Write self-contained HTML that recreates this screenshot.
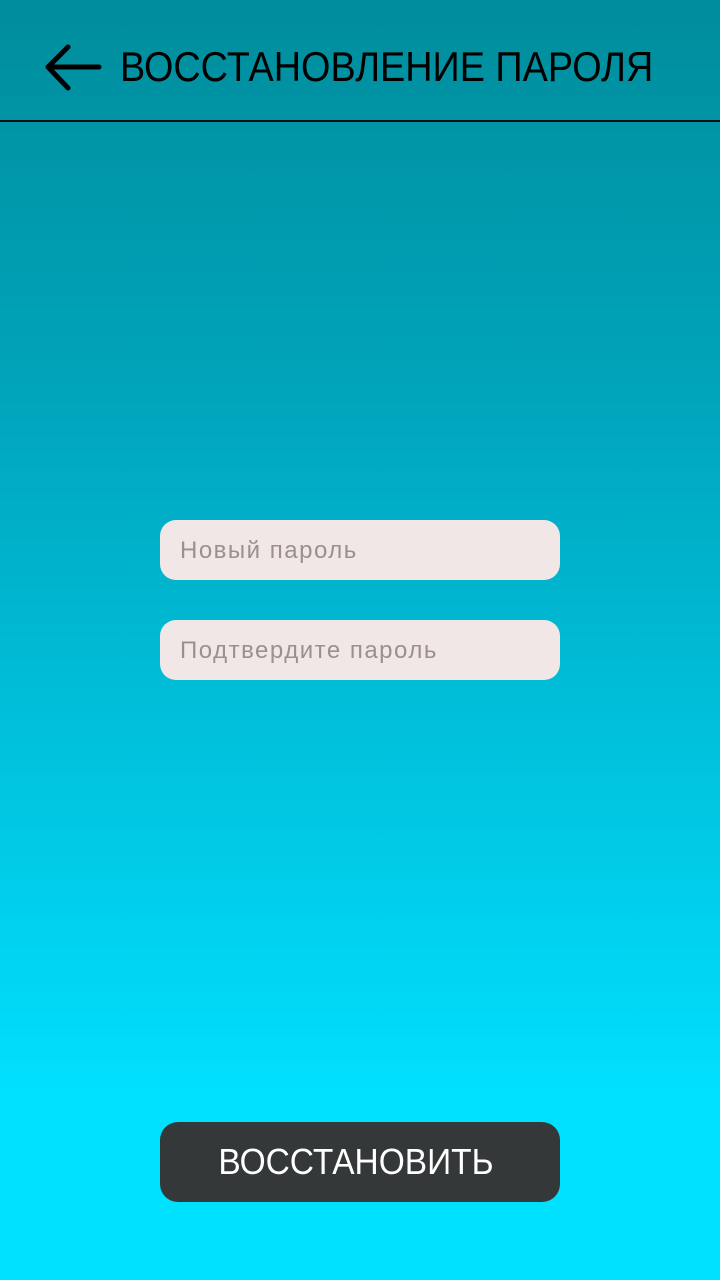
<!DOCTYPE html>
<html><head><meta charset="utf-8"><style>
html,body{margin:0;padding:0}
body{width:720px;height:1280px;position:relative;overflow:hidden;font-family:"Liberation Sans",sans-serif;
background:linear-gradient(180deg,#008d9c 0px,#00a5bc 400px,#00c6e2 800px,#00e1ff 1100px,#00e1ff 1280px);}
.hdr{position:absolute;left:0;top:0;width:720px;height:120px;border-bottom:2px solid #111;}
.title{position:absolute;left:120px;top:44px;font-size:42px;color:#000;white-space:nowrap;transform-origin:0 0;transform:scaleX(0.9);line-height:46px}
.in{position:absolute;left:160px;width:400px;height:60px;border-radius:16px;background:#f2e7e7;color:#9a9090;font-size:24px;line-height:62px;box-sizing:border-box;padding-left:20px;letter-spacing:1.5px}
.btn{position:absolute;left:160px;top:1122px;width:400px;height:80px;border-radius:18px;background:#353839;color:#fff;font-size:36px;line-height:80px;text-align:center;box-sizing:border-box;padding-right:8px}
.btn span{display:inline-block;transform:scaleX(0.93);font-weight:300}
</style></head><body>
<div class="hdr">
<svg style="position:absolute;left:44px;top:44px" width="58" height="48" viewBox="0 0 58 48"><path d="M55 23H5M24 3L4 23L24 44" fill="none" stroke="#000" stroke-width="5" stroke-linecap="round" stroke-linejoin="round"/></svg>
<div class="title">ВОССТАНОВЛЕНИЕ ПАРОЛЯ</div>
</div>
<div class="in" style="top:520px">Новый пароль</div>
<div class="in" style="top:620px">Подтвердите пароль</div>
<div class="btn"><span>ВОССТАНОВИТЬ</span></div>
</body></html>
